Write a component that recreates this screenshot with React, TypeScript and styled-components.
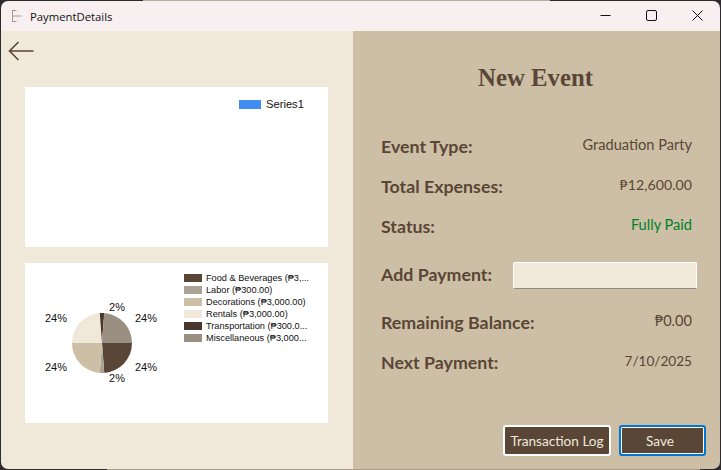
import React from 'react';
import styled, { createGlobalStyle } from 'styled-components';

const GlobalStyle = createGlobalStyle`
  html, body {
    margin: 0;
    padding: 0;
    width: 721px;
    height: 470px;
    overflow: hidden;
    font-family: Lato, "Open Sans", sans-serif;
  }
`;

// what shows of the desktop round the window, one pixel on each side
const Desktop = styled.div`
  box-sizing: border-box;
  width: 721px;
  height: 470px;
  padding: 1px;
  background:
    linear-gradient(90deg, #2b2a2c 143px, #b8ad9c 143px, #b8ad9c 550px, #2b2a2c 550px) top / 100% 1px no-repeat,
    linear-gradient(90deg, #2b2a2c 107px, #a59c8b 107px, #a59c8b 700px, #2b2a2c 700px) bottom / 100% 1px no-repeat,
    #2b2a2c;
`;

const Window = styled.div`
  width: 719px;
  height: 468px;
  display: flex;
  flex-direction: column;
  border-radius: 7px;
  overflow: hidden;
`;

const TitleBar = styled.div`
  height: 30px;
  flex: none;
  display: flex;
  align-items: center;
  background: #f8eff1;
  padding-left: 8px;
`;

const AppTitle = styled.span`
  flex: 1;
  margin-left: 7px;
  font-family: 'Open Sans', sans-serif;
  font-size: 11.3px;
  color: #111;
`;

const WindowButton = styled.div`
  width: 46px;
  height: 30px;
  box-sizing: border-box;
  padding-bottom: 2px;
  display: flex;
  align-items: center;
  justify-content: center;
`;

const Body = styled.div`
  flex: 1;
  display: grid;
  grid-template-columns: 352px 367px;
  min-height: 0;
`;

const LeftPanel = styled.div`
  background: #f0e9da;
  padding: 9px 24px 0;
  display: flex;
  flex-direction: column;
`;

const BackButton = styled.div`
  height: 47px;
  margin-left: -17px;
`;

const ChartCard = styled.div`
  width: 303px;
  height: 160px;
  background: #fff;
  margin-bottom: 16px;
  display: flex;
  font-family: 'Liberation Sans', Arial, sans-serif;
  color: #111;
`;

const SeriesLegend = styled.div`
  margin-left: 214px;
  margin-top: 10px;
  display: flex;
  align-items: center;
  gap: 5px;
  height: 14px;
  font-size: 11.2px;
`;

const SeriesSwatch = styled.span`
  width: 22px;
  height: 9px;
  background: #418cf0;
`;

const PieLegend = styled.div`
  margin-left: 9px;
  margin-top: 9px;
  display: flex;
  flex-direction: column;
`;

const LegendRow = styled.div`
  height: 12px;
  display: flex;
  align-items: center;
  gap: 4px;
  font-size: 9.2px;
  white-space: nowrap;
`;

const LegendSwatch = styled.span<{ $color: string }>`
  width: 18px;
  height: 8px;
  background: ${(p) => p.$color};
  flex: none;
`;

const RightPanel = styled.div`
  background: #cdbfa5;
  padding: 0 28px;
  display: flex;
  flex-direction: column;
  color: #5a4636;
`;

const Heading = styled.h1`
  margin: 32px 2px 33px 0;
  height: 30px;
  line-height: 30px;
  text-align: center;
  font-family: 'Liberation Serif', serif;
  font-weight: 700;
  font-size: 24.8px;
`;

const Row = styled.div<{ $height: number }>`
  height: ${(p) => p.$height}px;
  display: flex;
  justify-content: space-between;
  align-items: center;
`;

const Label = styled.span`
  font-weight: 700;
  font-size: 17.8px;
`;

const Value = styled.span<{ $color?: string; $size?: number }>`
  font-size: ${(p) => p.$size ?? 14.6}px;
  margin-top: -3px;
  color: ${(p) => p.$color ?? '#5a4636'};
`;

const PaymentInput = styled.input`
  box-sizing: border-box;
  width: 184px;
  height: 27px;
  margin: 2px -5px 0 0;
  background: #f0e9da;
  border: 1px solid #fff;
  border-bottom: 1px solid #8a8a8a;
  border-radius: 2px;
  outline: none;
`;

const Footer = styled.div`
  margin-top: auto;
  margin-bottom: 13px;
  margin-right: -14px;
  display: flex;
  justify-content: flex-end;
  gap: 8px;
`;

const ActionButton = styled.button<{ $width: number; $focused?: boolean }>`
  box-sizing: border-box;
  width: ${(p) => p.$width}px;
  height: 31px;
  background: #5a4636;
  color: #f0e9da;
  font-family: Lato, sans-serif;
  font-size: 13.6px;
  border-radius: 3px;
  border: 2px solid #fff;
  padding: 0;
  ${(p) => p.$focused && 'border-color: #0078d4; outline: 1px solid #fff; outline-offset: -3px; padding-right: 5px;'}
`;

const slices = [
  { name: 'Food & Beverages (₱3,...', color: '#5a4636', amount: 3000 },
  { name: 'Labor (₱300.00)', color: '#a9a295', amount: 300 },
  { name: 'Decorations (₱3,000.00)', color: '#cdbfa5', amount: 3000 },
  { name: 'Rentals (₱3,000.00)', color: '#f0e9da', amount: 3000 },
  { name: 'Transportation (₱300.0...', color: '#4a382e', amount: 300 },
  { name: 'Miscellaneous (₱3,000...', color: '#9a9082', amount: 3000 },
];

const pieLabels = [
  { x: 121, y: 59, text: '24%' },
  { x: 92, y: 48, text: '2%' },
  { x: 121, y: 108, text: '24%' },
  { x: 92, y: 119, text: '2%' },
  { x: 31, y: 59, text: '24%' },
  { x: 31, y: 108, text: '24%' },
];

const Pie = () => {
  const total = slices.reduce((sum, s) => sum + s.amount, 0);
  const cx = 77;
  const cy = 80;
  const r = 30;
  let angle = 0;
  return (
    <svg width="150" height="160" style={{ flex: 'none' }}>
      {slices.map((s) => {
        const next = angle + (s.amount / total) * Math.PI * 2;
        const d = `M${cx} ${cy}L${cx + r * Math.cos(angle)} ${cy + r * Math.sin(angle)}A${r} ${r} 0 0 1 ${cx + r * Math.cos(next)} ${cy + r * Math.sin(next)}Z`;
        angle = next;
        return <path key={s.name} d={d} fill={s.color} />;
      })}
      {pieLabels.map((l, i) => (
        <text key={i} x={l.x} y={l.y} fontSize="11" textAnchor="middle" fill="#111">
          {l.text}
        </text>
      ))}
    </svg>
  );
};

export default function App() {
  return (
    <Desktop>
      <GlobalStyle />
      <Window>
        <TitleBar>
          <svg width="14" height="14" viewBox="0 0 14 14" fill="none" stroke="#a89a8c" strokeWidth="1">
            <path d="M3.5 1v12M3.5 1.5h4M3.5 7h9M3.5 12.5h4" />
          </svg>
          <AppTitle>PaymentDetails</AppTitle>
          <WindowButton>
            <svg width="11" height="11" fill="none" stroke="#111"><path d="M0.5 5.5h10" /></svg>
          </WindowButton>
          <WindowButton>
            <svg width="11" height="11" fill="none" stroke="#111"><rect x="0.5" y="0.5" width="10" height="10" rx="1.5" /></svg>
          </WindowButton>
          <WindowButton>
            <svg width="11" height="11" fill="none" stroke="#111"><path d="M0.5 0.5l10 10M10.5 0.5l-10 10" /></svg>
          </WindowButton>
        </TitleBar>
        <Body>
          <LeftPanel>
            <BackButton>
              <svg width="26" height="22" viewBox="0 0 26 22" fill="none" stroke="#5a4636" strokeWidth="1.6">
                <path d="M1.5 11h24M10.5 2l-9 9 9 9" />
              </svg>
            </BackButton>
            <ChartCard>
              <SeriesLegend>
                <SeriesSwatch />
                Series1
              </SeriesLegend>
            </ChartCard>
            <ChartCard>
              <Pie />
              <PieLegend>
                {slices.map((s) => (
                  <LegendRow key={s.name}>
                    <LegendSwatch $color={s.color} />
                    {s.name}
                  </LegendRow>
                ))}
              </PieLegend>
            </ChartCard>
          </LeftPanel>
          <RightPanel>
            <Heading>New Event</Heading>
            <Row $height={40}>
              <Label>Event Type:</Label>
              <Value>Graduation Party</Value>
            </Row>
            <Row $height={40}>
              <Label>Total Expenses:</Label>
              <Value $size={14.2}>₱12,600.00</Value>
            </Row>
            <Row $height={40}>
              <Label>Status:</Label>
              <Value $color="#008028">Fully Paid</Value>
            </Row>
            <Row $height={56}>
              <Label>Add Payment:</Label>
              <PaymentInput />
            </Row>
            <Row $height={40}>
              <Label>Remaining Balance:</Label>
              <Value>₱0.00</Value>
            </Row>
            <Row $height={40}>
              <Label>Next Payment:</Label>
              <Value $size={13.6}>7/10/2025</Value>
            </Row>
            <Footer>
              <ActionButton $width={108}>Transaction Log</ActionButton>
              <ActionButton $width={87} $focused>Save</ActionButton>
            </Footer>
          </RightPanel>
        </Body>
      </Window>
    </Desktop>
  );
}
